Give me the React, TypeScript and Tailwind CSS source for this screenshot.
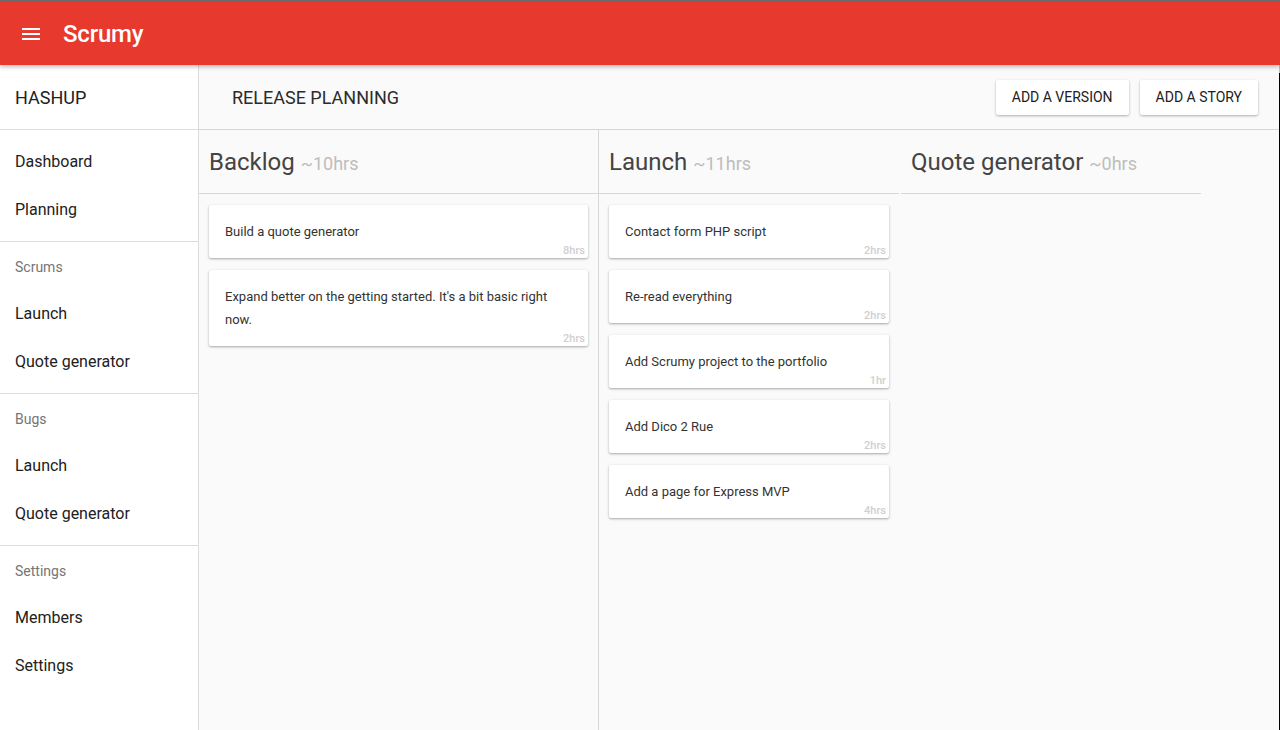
import React from "react";

type Story = { text: string; hrs: string };
type Col = { title: string; total: string; stories: Story[]; width: string; border?: boolean };

const columns: Col[] = [
  {
    title: "Backlog",
    total: "~10hrs",
    width: "w-[400px]",
    border: true,
    stories: [
      { text: "Build a quote generator", hrs: "8hrs" },
      { text: "Expand better on the getting started. It's a bit basic right now.", hrs: "2hrs" },
    ],
  },
  {
    title: "Launch",
    total: "~11hrs",
    width: "w-[300px]",
    stories: [
      { text: "Contact form PHP script", hrs: "2hrs" },
      { text: "Re-read everything", hrs: "2hrs" },
      { text: "Add Scrumy project to the portfolio", hrs: "1hr" },
      { text: "Add Dico 2 Rue", hrs: "2hrs" },
      { text: "Add a page for Express MVP", hrs: "4hrs" },
    ],
  },
  {
    title: "Quote generator",
    total: "~0hrs",
    width: "w-[300px] ml-[2px]",
    stories: [],
  },
];

const groups = [
  { label: null, items: ["Dashboard", "Planning"] },
  { label: "Scrums", items: ["Launch", "Quote generator"] },
  { label: "Bugs", items: ["Launch", "Quote generator"] },
  { label: "Settings", items: ["Members", "Settings"] },
];

function Card({ s }: { s: Story }) {
  return (
    <div className="bg-white rounded-[2px] shadow-[0_1px_3px_rgba(0,0,0,0.22),0_1px_2px_rgba(0,0,0,0.14)] pt-[15px]">
      <div className="px-4 text-[13px] leading-[23px] text-[#333]">{s.text}</div>
      <div className="mt-[1px] text-right pr-[3px] text-[11px] leading-[14px] font-medium text-[#cfcfcf]">{s.hrs}</div>
    </div>
  );
}

export default function App() {
  return (
    <div
      className="w-[1280px] h-[730px] overflow-hidden flex flex-col bg-[#fafafa]"
      style={{ fontFamily: "Roboto, 'Noto Sans', Arial, sans-serif" }}
    >
      <header className="relative z-10 h-[65px] shrink-0 border-t-2 border-[#6b6b6b] bg-[#e7392e] flex items-center shadow-[0_2px_4px_rgba(0,0,0,0.25)]">
        <div className="w-[63px] flex items-center pl-[22px]">
          <svg width="18" height="12" viewBox="0 0 18 12" fill="white">
            <rect x="0" y="0" width="18" height="2" />
            <rect x="0" y="5" width="18" height="2" />
            <rect x="0" y="10" width="18" height="2" />
          </svg>
        </div>
        <span className="text-white text-[24px] font-medium tracking-[-0.2px]">Scrumy</span>
      </header>
      <div className="flex flex-1 min-h-0">
        <aside className="w-[199px] shrink-0 bg-white border-r border-[#dcdcdc] flex flex-col">
          <div className="h-[65px] shrink-0 flex items-center px-[15px] border-b border-[#dcdcdc] text-[18px] text-[#212121]">
            HASHUP
          </div>
          {groups.map((g, i) => (
            <div key={i} className={`pt-2 pb-[7px] ${i < groups.length - 1 ? "border-b border-[#dcdcdc]" : ""}`}>
              {g.label && (
                <div className="h-[40px] flex items-center pb-[6px] px-[15px] text-[14px] text-[#757575]">{g.label}</div>
              )}
              {g.items.map((it, j) => (
                <div key={j} className="h-12 flex items-center px-[15px] text-[16px] text-[#212121]">
                  {it}
                </div>
              ))}
            </div>
          ))}
        </aside>
        <main className="flex-1 flex flex-col min-w-0">
          <div className="h-[65px] shrink-0 border-b border-[#d6d6d6] flex items-center pl-[33px] pr-[21px]">
            <div className="flex-1 text-[18px] text-[#2b2b2b]">RELEASE PLANNING</div>
            <div className="flex gap-[11px]">
              <button className="h-[35px] px-4 bg-white rounded-[2px] shadow-[0_1px_3px_rgba(0,0,0,0.2),0_1px_2px_rgba(0,0,0,0.12)] text-[14px] font-normal text-[#212121]">
                ADD A VERSION
              </button>
              <button className="h-[35px] px-4 bg-white rounded-[2px] shadow-[0_1px_3px_rgba(0,0,0,0.2),0_1px_2px_rgba(0,0,0,0.12)] text-[14px] font-normal text-[#212121]">
                ADD A STORY
              </button>
            </div>
          </div>
          <div className="flex flex-1 min-h-0">
            {columns.map((c, i) => (
              <div key={i} className={`${c.width} shrink-0 flex flex-col ${c.border ? "border-r border-[#d6d6d6]" : ""}`}>
                <div className="h-[64px] shrink-0 border-b border-[#d6d6d6] flex items-center px-[10px] gap-[6px]">
                  <span className="text-[24px] text-[#444]">{c.title}</span>
                  <span className="text-[18px] text-[#bdbdbd] mt-[3px]">{c.total}</span>
                </div>
                <div className="flex flex-col gap-[12px] pt-[11px] pl-[10px] pr-[10px]">
                  {c.stories.map((s, j) => (
                    <Card key={j} s={s} />
                  ))}
                </div>
              </div>
            ))}
            <div className="flex-1" />
          </div>
        </main>
        <div className="w-px shrink-0 flex flex-col">
          <div className="h-[8px] bg-[#bcbcbc]" />
          <div className="flex-1 bg-black" />
        </div>
      </div>
    </div>
  );
}
